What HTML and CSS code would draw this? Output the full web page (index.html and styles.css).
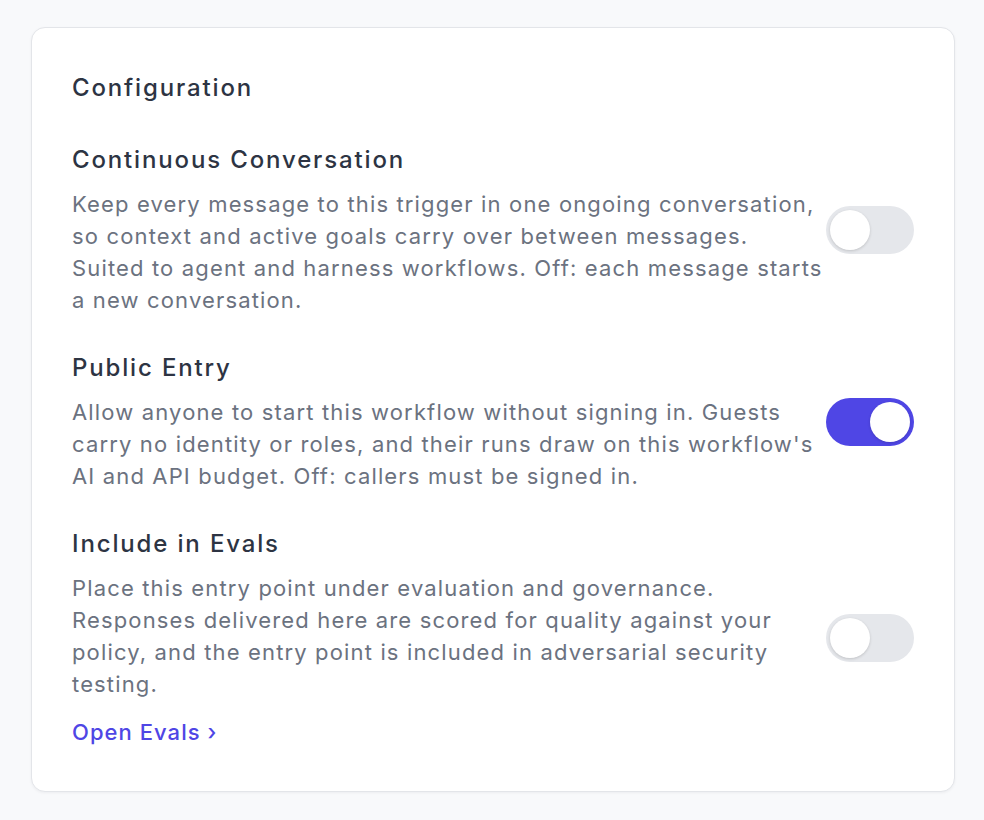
FILE: index.html
```html
<!DOCTYPE html>
<html lang="en">
<head>
<meta charset="utf-8">
<title>Configuration</title>
<link rel="stylesheet" href="styles.css">
</head>
<body>
  <section class="card">
    <h2 class="card-title">Configuration</h2>

    <div class="setting">
      <div class="setting-text">
        <h3 class="setting-name">Continuous Conversation</h3>
        <p class="setting-desc">Keep every message to this trigger in one ongoing conversation, so context and active goals carry over between messages. Suited to agent and harness workflows. Off: each message starts a new conversation.</p>
      </div>
      <span class="toggle" role="switch" aria-checked="false"><span class="knob"></span></span>
    </div>

    <div class="setting">
      <div class="setting-text">
        <h3 class="setting-name">Public Entry</h3>
        <p class="setting-desc">Allow anyone to start this workflow without signing in. Guests carry no identity or roles, and their runs draw on this workflow's AI and API budget. Off: callers must be signed in.</p>
      </div>
      <span class="toggle on" role="switch" aria-checked="true"><span class="knob"></span></span>
    </div>

    <div class="setting">
      <div class="setting-text">
        <h3 class="setting-name">Include in Evals</h3>
        <p class="setting-desc">Place this entry point under evaluation and governance. Responses delivered here are scored for quality against your policy, and the entry point is included in adversarial security testing.</p>
        <a class="setting-link" href="#">Open Evals ›</a>
      </div>
      <span class="toggle" role="switch" aria-checked="false"><span class="knob"></span></span>
    </div>
  </section>
</body>
</html>
```

FILE: styles.css
```css
* { box-sizing: border-box; }

html, body {
  margin: 0;
  background: #f8f9fb;
}

body {
  padding: 27px 29px 28px 31px;
  font-family: Inter, "Noto Sans", "Liberation Sans", sans-serif;
  -webkit-font-smoothing: antialiased;
}

.card {
  background: #ffffff;
  border: 1px solid #e3e5e9;
  border-radius: 14px;
  box-shadow: 0 1px 3px rgba(16, 24, 40, 0.05);
  padding: 44px 40px 43px 40px;
  display: flex;
  flex-direction: column;
  gap: 36px;
}

.card-title {
  margin: 0 0 4px;
  font-size: 24px;
  line-height: 32px;
  font-weight: 500;
  letter-spacing: 1.85px;
  color: #2d3443;
}

.setting {
  display: flex;
  align-items: center;
}

.setting-text {
  flex: 1;
  min-width: 0;
  margin-right: 1px;
}

.setting-name {
  margin: 0;
  font-size: 24px;
  line-height: 32px;
  font-weight: 500;
  letter-spacing: 1.85px;
  color: #2d3443;
}

.setting-desc {
  margin: 12px 0 0;
  font-size: 22px;
  line-height: 32px;
  font-weight: 400;
  letter-spacing: 1.15px;
  color: #6b7280;
}

.setting-link {
  display: inline-block;
  margin-top: 16px;
  font-size: 22px;
  line-height: 32px;
  font-weight: 500;
  letter-spacing: 1.05px;
  color: #4f46e5;
  text-decoration: none;
}

.toggle {
  flex: none;
  width: 88px;
  height: 48px;
  border-radius: 24px;
  background: #e5e7eb;
  padding: 4px;
  display: flex;
  align-items: center;
}

.toggle .knob {
  width: 40px;
  height: 40px;
  border-radius: 50%;
  background: #ffffff;
  box-shadow: 0 1px 3px rgba(0, 0, 0, 0.16);
}

.toggle.on {
  background: #4f46e5;
  justify-content: flex-end;
}
```
